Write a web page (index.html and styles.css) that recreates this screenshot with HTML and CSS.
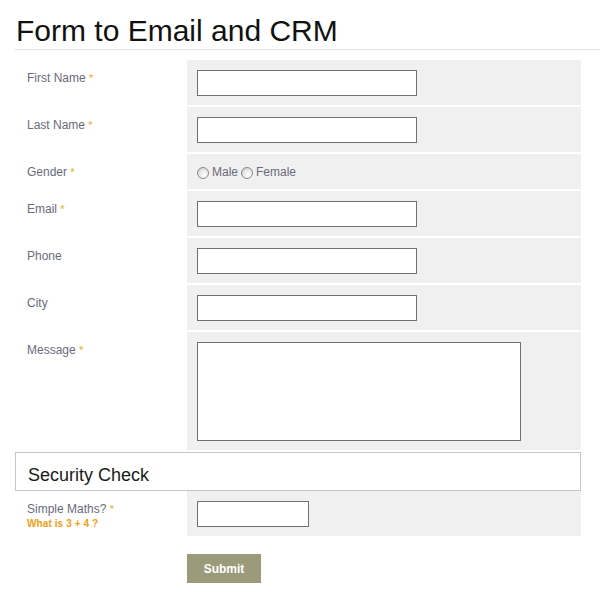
FILE: index.html
```html
<!DOCTYPE html>
<html>
<head>
<meta charset="utf-8">
<link rel="stylesheet" href="styles.css">
</head>
<body>
<div class="page">
  <h1 class="title">Form to Email and CRM</h1>
  <form class="form">
    <div class="row">
      <div class="label">First Name <span class="req">*</span></div>
      <div class="field"><input class="text" type="text"></div>
    </div>
    <div class="row">
      <div class="label">Last Name <span class="req">*</span></div>
      <div class="field"><input class="text" type="text"></div>
    </div>
    <div class="row">
      <div class="label">Gender <span class="req">*</span></div>
      <div class="field radios">
        <label class="opt"><input class="radio" type="radio" name="g">Male</label>
        <label class="opt"><input class="radio" type="radio" name="g">Female</label>
      </div>
    </div>
    <div class="row">
      <div class="label">Email <span class="req">*</span></div>
      <div class="field"><input class="text" type="text"></div>
    </div>
    <div class="row">
      <div class="label">Phone</div>
      <div class="field"><input class="text" type="text"></div>
    </div>
    <div class="row">
      <div class="label">City</div>
      <div class="field"><input class="text" type="text"></div>
    </div>
    <div class="row">
      <div class="label">Message <span class="req">*</span></div>
      <div class="field"><textarea class="area"></textarea></div>
    </div>
    <div class="section">Security Check</div>
    <div class="row">
      <div class="label">Simple Maths? <span class="req">*</span><div class="hint">What is 3 + 4 ?</div></div>
      <div class="field"><input class="text short" type="text"></div>
    </div>
    <div class="actions">
      <button class="submit" type="button">Submit</button>
    </div>
  </form>
</div>
</body>
</html>
```
FILE: styles.css
```css
html, body {
  margin: 0;
  padding: 0;
  background: #fff;
}
body {
  font-family: Arial, "Liberation Sans", sans-serif;
}
.page {
  padding-left: 15px;
}
.title {
  margin: 13px 0 10px;
  padding: 0 0 0 1px;
  font-size: 30px;
  font-weight: normal;
  line-height: 36px;
  color: #111;
  border-bottom: 1px solid #e2e2e2;
}
.form {
  width: 566px;
}
.row {
  display: grid;
  grid-template-columns: 172px 394px;
  margin-bottom: 2px;
}
.label {
  padding: 11px 0 0 12px;
  font-size: 12px;
  line-height: 15px;
  color: #6c6a7c;
}
.req {
  color: #f5a81e;
  font-size: 11px;
}
.hint {
  color: #f29d12;
  font-size: 10px;
  font-weight: bold;
  line-height: 14px;
  letter-spacing: 0.1px;
}
.field {
  background: #f0f0f0;
  padding: 10px 0 9px 10px;
}
.text {
  display: block;
  box-sizing: border-box;
  width: 220px;
  height: 26px;
  margin: 0;
  border: 1px solid #707070;
  background: #fff;
  padding: 2px 4px;
}
.text.short {
  width: 112px;
}
.area {
  display: block;
  box-sizing: border-box;
  width: 324px;
  height: 99px;
  margin: 0;
  border: 1px solid #707070;
  background: #fff;
  resize: none;
}
.radios {
  display: flex;
  align-items: center;
  gap: 3px;
  padding-top: 11px;
  padding-bottom: 9px;
  font-size: 12px;
  line-height: 15px;
  color: #6c6a7c;
}
.opt {
  display: flex;
  align-items: center;
  gap: 3px;
}
.radio {
  -webkit-appearance: none;
  appearance: none;
  width: 12px;
  height: 12px;
  margin: 0;
  border: 1px solid #8a8a8a;
  border-radius: 50%;
  background: radial-gradient(circle at 65% 70%, #ffffff 0%, #e6e6e6 55%, #bdbdbd 100%);
  box-sizing: border-box;
}
.section {
  box-sizing: border-box;
  height: 39px;
  border: 1px solid #c6c6c6;
  padding: 11px 12px 0;
  font-size: 18px;
  line-height: 22px;
  color: #1a1a1a;
}
.actions {
  padding: 16px 0 0 172px;
}
.submit {
  display: block;
  width: 74px;
  height: 29px;
  border: 0;
  margin: 0;
  background: #9b9a7a;
  color: #fff;
  font-family: Arial, "Liberation Sans", sans-serif;
  font-size: 12px;
  font-weight: bold;
  cursor: pointer;
}
```
